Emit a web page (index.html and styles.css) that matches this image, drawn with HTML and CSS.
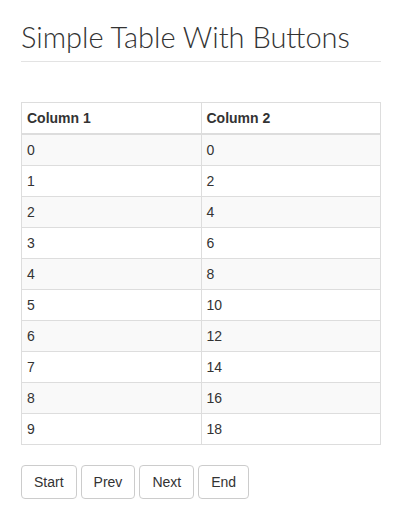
FILE: index.html
```html
<!DOCTYPE html>
<html>
<head>
<meta charset="utf-8">
<link rel="stylesheet" href="styles.css">
</head>
<body>
<div class="container">
  <h1 class="title">Simple Table With Buttons</h1>
  <table class="table">
    <thead>
      <tr><th>Column 1</th><th>Column 2</th></tr>
    </thead>
    <tbody>
      <tr><td>0</td><td>0</td></tr>
      <tr><td>1</td><td>2</td></tr>
      <tr><td>2</td><td>4</td></tr>
      <tr><td>3</td><td>6</td></tr>
      <tr><td>4</td><td>8</td></tr>
      <tr><td>5</td><td>10</td></tr>
      <tr><td>6</td><td>12</td></tr>
      <tr><td>7</td><td>14</td></tr>
      <tr><td>8</td><td>16</td></tr>
      <tr><td>9</td><td>18</td></tr>
    </tbody>
  </table>
  <div class="buttons">
    <button class="btn">Start</button>
    <button class="btn">Prev</button>
    <button class="btn">Next</button>
    <button class="btn">End</button>
  </div>
</div>
</body>
</html>
```
FILE: styles.css
```css
html, body {
  margin: 0;
  padding: 0;
  background: #fff;
}
body {
  font-family: "Liberation Sans", Arial, sans-serif;
  font-size: 14px;
  line-height: 20px;
  color: #333;
}
.container {
  padding: 0 20px 0 21px;
}
.title {
  margin: 0;
  padding: 19px 0 0 0;
  height: 42px;
  border-bottom: 1px solid #e3e3e3;
  font-family: Lato, sans-serif;
  font-weight: 300;
  font-size: 29px;
  line-height: 36px;
  color: #333;
}
.table {
  margin-top: 40px;
  width: 100%;
  border-collapse: collapse;
  border: 1px solid #ddd;
}
.table th, .table td {
  text-align: left;
  padding: 5px 5px;
  border: 1px solid #ddd;
  width: 50%;
}
.table th {
  font-weight: bold;
  border-bottom-width: 2px;
}
.table tbody tr:nth-child(odd) {
  background: #f9f9f9;
}
.buttons {
  display: flex;
  gap: 4px;
  margin-top: 20px;
}
.btn {
  font-family: "Liberation Sans", Arial, sans-serif;
  font-size: 14px;
  line-height: 20px;
  color: #333;
  background: #fff;
  border: 1px solid #ccc;
  border-radius: 4px;
  padding: 6px 12px;
  margin: 0;
}
```
